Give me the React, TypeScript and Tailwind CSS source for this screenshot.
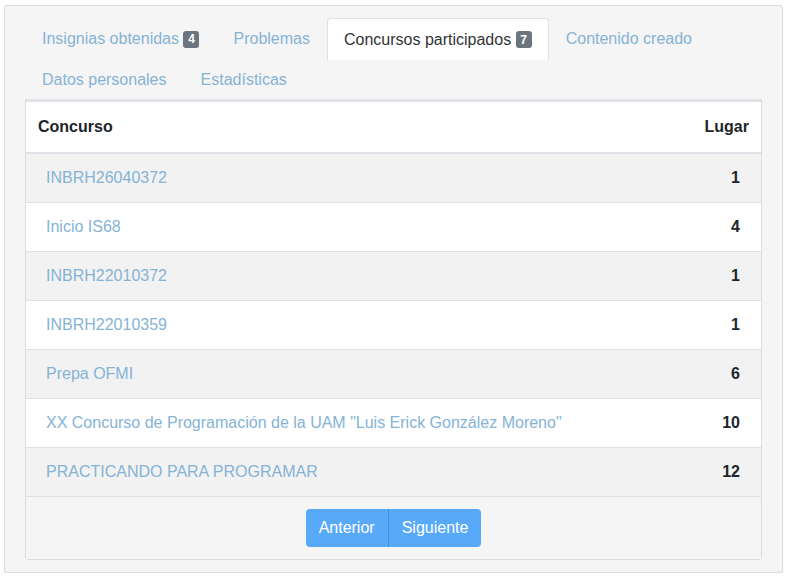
const contests = [
  { name: "INBRH26040372", place: 1 },
  { name: "Inicio IS68", place: 4 },
  { name: "INBRH22010372", place: 1 },
  { name: "INBRH22010359", place: 1 },
  { name: "Prepa OFMI", place: 6 },
  { name: 'XX Concurso de Programación de la UAM "Luis Erick González Moreno"', place: 10 },
  { name: "PRACTICANDO PARA PROGRAMAR", place: 12 }
];

function Badge({ children }: { children: React.ReactNode }) {
  return (
    <span className="ml-[4.5px] inline-flex h-[17px] w-[16px] items-center justify-center rounded-[3px] bg-[#6c757d] text-[12px] font-bold leading-none text-white">
      {children}
    </span>
  );
}

function Tab({
  active,
  children
}: {
  active?: boolean;
  children: React.ReactNode;
}) {
  return (
    <div
      className={
        active
          ? "-mb-px flex h-[42px] items-center rounded-t-[4px] border border-b-0 border-[#dee2e6] bg-white px-4 text-[#333]"
          : "-mb-px flex h-[42px] items-center border border-transparent px-4 text-[#85b3d6]"
      }
    >
      {children}
    </div>
  );
}

export default function App() {
  return (
    <div className="bg-white pl-[4px] pr-[5px] pt-[5px] font-['Liberation_Sans',Arial,sans-serif] text-[16px]">
      <div className="rounded-[3px] border border-[#dcdcdc] bg-[#f5f5f5] px-5 pb-[12px] pt-3 shadow-[0_1px_1px_rgba(0,0,0,0.12)]">
        <div className="flex flex-wrap">
          <Tab>
            Insignias obtenidas<Badge>4</Badge>
          </Tab>
          <Tab>Problemas</Tab>
          <Tab active>
            Concursos participados<Badge>7</Badge>
          </Tab>
          <Tab>Contenido creado</Tab>
          <Tab>Datos personales</Tab>
          <Tab>Estadísticas</Tab>
        </div>
        <div className="mt-[-1px] rounded-b-[4px] border border-t-[3px] border-[#dcdcdc] border-t-[#dee2e6]">
          <div className="flex h-[52px] items-center justify-between border-b-2 border-[#dee2e6] bg-white px-3 font-bold text-[#212529]">
            <span>Concurso</span>
            <span>Lugar</span>
          </div>
          {contests.map((c, i) => (
            <div
              key={c.name}
              className={
                (i % 2 === 0 ? "bg-[#f2f2f2] " : "bg-white ") +
                "flex h-[49px] items-center justify-between border-b border-[#dee2e6] pl-5 pr-[21px]"
              }
            >
              <span className="text-[#85b3d6]">{c.name}</span>
              <span className="font-bold text-[#212529]">{c.place}</span>
            </div>
          ))}
          <div className="flex h-[62px] justify-center bg-[#f5f5f5] pt-[12px]">
            <div className="flex h-[38px] overflow-hidden rounded-[4px] bg-[#58aaf8] text-white">
              <span className="flex items-center border-r border-[#3b8ee0] px-[13px]">Anterior</span>
              <span className="flex items-center px-[13px]">Siguiente</span>
            </div>
          </div>
        </div>
      </div>
    </div>
  );
}
